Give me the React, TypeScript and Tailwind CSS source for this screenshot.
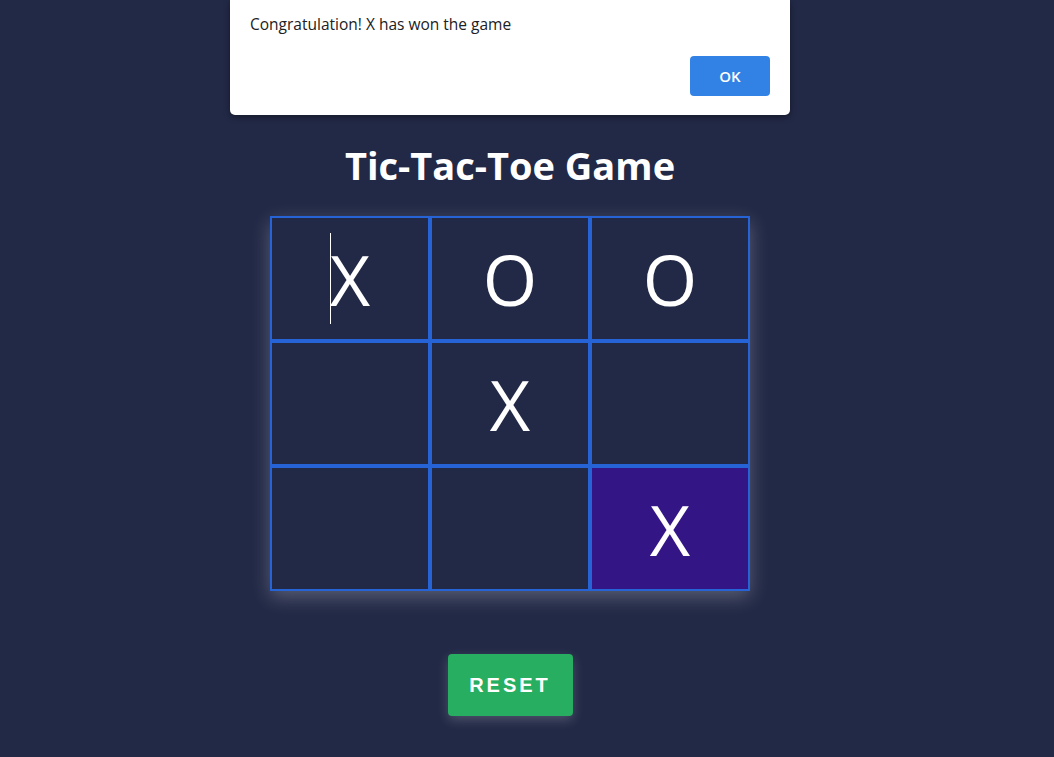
import { useState } from 'react';

type Mark = 'X' | 'O' | '';

const initial: Mark[] = ['X', 'O', 'O', '', 'X', '', '', '', 'X'];
const winLine = [8];

export default function App() {
  const [board] = useState<Mark[]>(initial);

  return (
    <div
      className="relative min-h-[757px] w-full bg-[#222946] text-white"
      style={{ fontFamily: '"Open Sans", "Noto Sans", sans-serif' }}
    >
      <div className="flex w-[1020px] flex-col items-center pt-[138px]">
        <h1 className="text-[38px] font-bold leading-[55px] text-white">Tic-Tac-Toe Game</h1>

        <div className="mt-[23px] grid grid-cols-3 shadow-[0_6px_18px_rgba(255,255,255,0.25)]">
          {board.map((cell, i) => (
            <div
              key={i}
              className={`relative flex h-[125px] w-[160px] items-center justify-center border-2 border-[#2663d6] text-[70px] leading-none ${
                winLine.includes(i) ? 'bg-[#331586]' : 'bg-[#222946]'
              }`}
            >
              {cell}
              {i === 0 && <span className="absolute left-[58px] top-[15px] h-[91px] w-px bg-white" />}
            </div>
          ))}
        </div>

        <button
          className="mt-[63px] h-[62px] w-[125px] rounded-[4px] bg-[#27ae60] text-[20px] font-bold tracking-[3px] text-white shadow-[0_4px_12px_rgba(255,255,255,0.2)]"
          style={{ fontFamily: '"Liberation Sans", Arial, sans-serif' }}
        >
          RESET
        </button>
      </div>

      <div className="absolute left-[230px] top-0 h-[115px] w-[560px] rounded-b-[5px] bg-white shadow-[0_2px_6px_rgba(0,0,0,0.4)]">
        <p className="pl-5 pt-[13px] text-[15.5px] text-[#202124]">Congratulation! X has won the game</p>
        <button className="absolute left-[460px] top-[56px] h-[40px] w-[80px] rounded-[4px] bg-[#3182e4] text-[15px] font-semibold text-white">
          OK
        </button>
      </div>
    </div>
  );
}
